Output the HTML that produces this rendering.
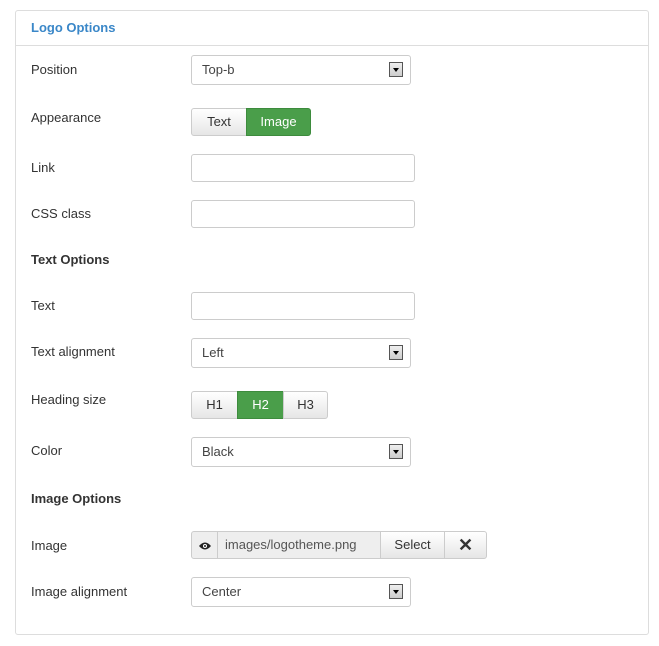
<!DOCTYPE html><html><head><style>
body{margin:0;background:#fff;font-family:"Liberation Sans",Arial,sans-serif;font-size:13px;color:#333;}
.p{position:absolute;left:15px;top:10px;width:632px;height:623px;border:1px solid #ddd;border-radius:3px;}
.hd{position:absolute;left:15px;top:10px;width:634px;height:35px;border-bottom:1px solid #ddd;}
.a{position:absolute;}
.l{position:absolute;left:31px;line-height:16px;}
.b{font-weight:bold;}
.sel,.inp{position:absolute;left:191px;box-sizing:border-box;border:1px solid #ccc;border-radius:3px;background:#fff;}
.sel{width:220px;height:30px;line-height:28px;padding-left:10px;color:#444;}
.sel i{position:absolute;right:7px;top:6px;width:14px;height:15px;border:1px solid #555;background:linear-gradient(#eee,#ccc);box-sizing:border-box;}
.sel i:after{content:"";position:absolute;left:3px;top:5px;border-left:3px solid transparent;border-right:3px solid transparent;border-top:4px solid #000;}
.inp{width:224px;height:28px;}
.btn{position:absolute;box-sizing:border-box;height:28px;line-height:26px;text-align:center;border:1px solid #ccc;background:linear-gradient(#fff,#e6e6e6);color:#333;}
.g{background:#4a9e4a;border-color:#3d8b3d;color:#fff;}
</style></head><body>
<div class="p"></div><div class="hd"></div>
<div class="a b" style="left:31px;top:20px;color:#3a87c8;line-height:16px">Logo Options</div>
<div class="l" style="top:62px">Position</div>
<div class="sel" style="top:55px">Top-b<i></i></div>
<div class="l" style="top:110px">Appearance</div>
<div class="btn" style="left:191px;top:108px;width:56px;border-radius:3px 0 0 3px">Text</div>
<div class="btn g" style="left:246px;top:108px;width:65px;border-radius:0 3px 3px 0">Image</div>
<div class="l" style="top:160px">Link</div>
<div class="inp" style="top:154px"></div>
<div class="l" style="top:206px">CSS class</div>
<div class="inp" style="top:200px"></div>
<div class="l b" style="top:252px">Text Options</div>
<div class="l" style="top:298px">Text</div>
<div class="inp" style="top:292px"></div>
<div class="l" style="top:344px">Text alignment</div>
<div class="sel" style="top:338px">Left<i></i></div>
<div class="l" style="top:392px">Heading size</div>
<div class="btn" style="left:191px;top:391px;width:47px;border-radius:3px 0 0 3px">H1</div>
<div class="btn g" style="left:237px;top:391px;width:47px">H2</div>
<div class="btn" style="left:283px;top:391px;width:45px;border-radius:0 3px 3px 0">H3</div>
<div class="l" style="top:443px">Color</div>
<div class="sel" style="top:437px">Black<i></i></div>
<div class="l b" style="top:491px">Image Options</div>
<div class="l" style="top:538px">Image</div>
<div class="btn" style="left:191px;top:531px;width:27px;background:#eee;border-radius:3px 0 0 3px"><svg width="12" height="8" viewBox="0 0 12 8" style="vertical-align:middle"><path d="M0 4Q6-3 12 4Q6 11 0 4Z" fill="#222"/><circle cx="6" cy="4" r="2" fill="#fff"/><circle cx="6" cy="4" r="1" fill="#222"/></svg></div>
<div class="btn" style="left:217px;top:531px;width:164px;background:#eee;text-align:left;padding-left:7px;color:#555">images/logotheme.png</div>
<div class="btn" style="left:380px;top:531px;width:65px">Select</div>
<div class="btn" style="left:444px;top:531px;width:43px;border-radius:0 3px 3px 0;font-weight:bold;font-size:18px">✕</div>
<div class="l" style="top:584px">Image alignment</div>
<div class="sel" style="top:577px">Center<i></i></div>
</body></html>
